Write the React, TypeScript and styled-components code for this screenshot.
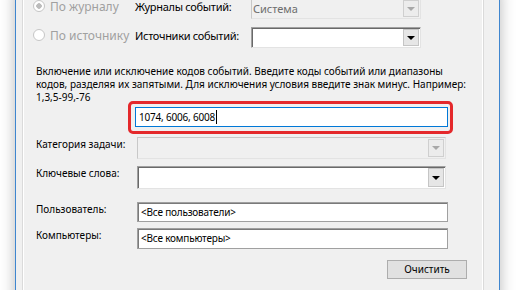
import React from 'react';
import styled, { createGlobalStyle } from 'styled-components';

const GlobalStyle = createGlobalStyle`
	html, body {
		margin: 0;
		padding: 0;
		background: #ffffff;
		overflow: hidden;
	}
	body {
		font-family: 'Noto Sans', 'Open Sans', sans-serif;
		font-size: 10px;
		color: #000000;
	}
`;

const Page = styled.div`
	width: 516px;
	height: 290px;
	overflow: hidden;
	padding-left: 15px;
	box-sizing: border-box;
`;

const Window = styled.div`
	width: 485px;
	height: 320px;
	margin-top: -12px;
	box-sizing: border-box;
	background: #f0f0f0;
	border-left: 1px solid #3f86cf;
	border-right: 1px solid #3f86cf;
	box-shadow: 0 0 14px rgba(0, 0, 0, 0.28);
	padding-left: 6px;
`;

const Panel = styled.div`
	width: 462px;
	height: 100%;
	box-sizing: border-box;
	border-left: 1px solid #dadada;
	border-right: 1px solid #dadada;
	box-shadow: inset 1px 0 #ffffff, inset -1px 0 #ffffff;
	padding: 10px 0 0 13px;
`;

const TopGrid = styled.div`
	display: grid;
	grid-template-columns: 99px 116px 170px;
	grid-auto-rows: 21px;
	row-gap: 8px;
`;

const Radio = styled.div<{ $checked?: boolean }>`
	display: flex;
	align-items: flex-start;
	gap: 5px;
	margin: 2px 0 0 -3px;
	color: #a0a0a0;
	font-size: 12px;
	line-height: 13px;
	white-space: nowrap;
	&::before {
		content: '';
		flex: none;
		width: 10px;
		height: 10px;
		border: 1px solid #c6c6c6;
		border-radius: 50%;
		background: ${({ $checked }) =>
			$checked ? 'radial-gradient(circle, #bcbcbc 0 2.5px, #ffffff 3px)' : '#ffffff'};
	}
`;

const TopLabel = styled.div`
	margin-top: 2px;
	font-size: 11px;
	letter-spacing: -0.3px;
	line-height: 13px;
	white-space: nowrap;
`;

const Label = styled.div`
	line-height: 15px;
	white-space: nowrap;
`;

const Combo = styled.div<{ $disabled?: boolean; $height?: number }>`
	display: flex;
	align-items: stretch;
	height: ${({ $height }) => $height ?? 21}px;
	box-sizing: border-box;
	background: ${({ $disabled }) => ($disabled ? '#f0f0f0' : '#ffffff')};
	border-top: 1px solid ${({ $disabled }) => ($disabled ? '#c8c8c8' : '#a0a0a0')};
	border-left: 1px solid ${({ $disabled }) => ($disabled ? '#c8c8c8' : '#a0a0a0')};
	border-bottom: 1px solid #e3e3e3;
	border-right: 1px solid #e3e3e3;
	box-shadow: ${({ $disabled }) => ($disabled ? 'none' : 'inset 1px 1px #696969')};
	color: #6d6d6d;
	padding: 1px;
`;

const ComboText = styled.span`
	flex: 1;
	align-self: center;
	line-height: 15px;
	font-size: 11px;
`;

const DropButton = styled.div<{ $disabled?: boolean }>`
	width: 16px;
	box-sizing: border-box;
	display: flex;
	align-items: center;
	justify-content: center;
	background: ${({ $disabled }) => ($disabled ? '#ececec' : '#e6e6e6')};
	border: 1px solid ${({ $disabled }) => ($disabled ? '#cfcfcf' : '#c5c5c5')};
	&::after {
		content: '';
		border-left: 4px solid transparent;
		border-right: 4px solid transparent;
		border-top: 4px solid ${({ $disabled }) => ($disabled ? '#a8a8a8' : '#000000')};
	}
`;

const Description = styled.p`
	margin: 17px 0 0;
	line-height: 13px;
	white-space: nowrap;
`;

const FilterWrap = styled.div`
	position: relative;
	margin: 3px 0 0 99px;
	width: 313px;
`;

const Highlight = styled.div`
	position: absolute;
	left: -7px;
	right: -5px;
	top: -6px;
	bottom: -7px;
	border: 3px solid #e4282b;
	border-radius: 5px;
	pointer-events: none;
`;

const TextBox = styled.div<{ $focused?: boolean; $height?: number }>`
	display: flex;
	align-items: center;
	height: ${({ $height }) => $height ?? 20}px;
	box-sizing: border-box;
	background: #ffffff;
	border: 1px solid ${({ $focused }) => ($focused ? '#0078d7' : '#a0a0a0')};
	box-shadow: ${({ $focused }) => ($focused ? 'none' : 'inset 1px 1px #7a7a7a')};
	padding: 0 3px;
	line-height: 15px;
	letter-spacing: -0.2px;
	white-space: nowrap;
`;

const Caret = styled.span`
	display: inline-block;
	width: 1px;
	height: 14px;
	background: #000000;
	margin-left: 1px;
`;

const FormRow = styled.div<{ $gap: number; $width?: number }>`
	display: grid;
	grid-template-columns: 101px ${({ $width }) => $width ?? 309}px;
	align-items: start;
	margin-top: ${({ $gap }) => $gap}px;
`;

const ButtonRow = styled.div`
	display: flex;
	justify-content: flex-end;
	width: 431px;
	margin-top: 11px;
`;

const Button = styled.button`
	width: 80px;
	height: 19px;
	box-sizing: border-box;
	background: #e1e1e1;
	border: 1px solid #adadad;
	font: inherit;
	line-height: 15px;
	padding: 0;
	color: #000000;
`;

export default function App() {
	return (
		<Page>
			<GlobalStyle />
			<Window>
				<Panel>
					<TopGrid>
						<Radio $checked>По журналу</Radio>
						<TopLabel>Журналы событий:</TopLabel>
						<Combo $disabled>
							<ComboText>Система</ComboText>
							<DropButton $disabled />
						</Combo>
						<Radio>По источнику</Radio>
						<TopLabel>Источники событий:</TopLabel>
						<Combo>
							<ComboText />
							<DropButton />
						</Combo>
					</TopGrid>
					<Description>
						Включение или исключение кодов событий. Введите коды событий или диапазоны
						<br />
						кодов, разделяя их запятыми. Для исключения условия введите знак минус. Например:
						<br />
						1,3,5-99,-76
					</Description>
					<FilterWrap>
						<Highlight />
						<TextBox $focused>
							1074, 6006, 6008
							<Caret />
						</TextBox>
					</FilterWrap>
					<FormRow $gap={10}>
						<Label>Категория задачи:</Label>
						<Combo $disabled $height={22}>
							<ComboText />
							<DropButton $disabled />
						</Combo>
					</FormRow>
					<FormRow $gap={7}>
						<Label>Ключевые слова:</Label>
						<Combo $height={23}>
							<ComboText />
							<DropButton />
						</Combo>
					</FormRow>
					<FormRow $gap={13} $width={311}>
						<Label>Пользователь:</Label>
						<TextBox>&lt;Все пользователи&gt;</TextBox>
					</FormRow>
					<FormRow $gap={6} $width={311}>
						<Label>Компьютеры:</Label>
						<TextBox $height={21}>&lt;Все компьютеры&gt;</TextBox>
					</FormRow>
					<ButtonRow>
						<Button>Очистить</Button>
					</ButtonRow>
				</Panel>
			</Window>
		</Page>
	);
}
